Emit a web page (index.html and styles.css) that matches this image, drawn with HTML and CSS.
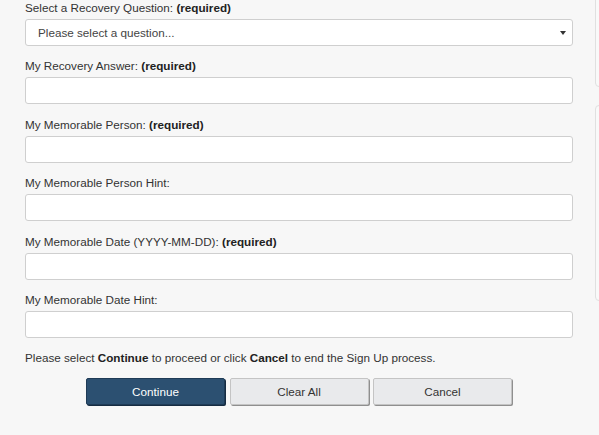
FILE: index.html
```html
<!DOCTYPE html>
<html>
<head>
<meta charset="utf-8">
<link rel="stylesheet" href="styles.css">
</head>
<body>
<div class="page">
  <main class="main">
    <form class="form">
      <div class="field">
        <label class="label">Select a Recovery Question: <b>(required)</b></label>
        <div class="select">
          <span>Please select a question...</span>
          <span class="arrow"></span>
        </div>
      </div>
      <div class="field">
        <label class="label">My Recovery Answer: <b>(required)</b></label>
        <input class="input" type="text">
      </div>
      <div class="field">
        <label class="label">My Memorable Person: <b>(required)</b></label>
        <input class="input" type="text">
      </div>
      <div class="field">
        <label class="label">My Memorable Person Hint:</label>
        <input class="input" type="text">
      </div>
      <div class="field">
        <label class="label">My Memorable Date (YYYY-MM-DD): <b>(required)</b></label>
        <input class="input" type="text">
      </div>
      <div class="field">
        <label class="label">My Memorable Date Hint:</label>
        <input class="input" type="text">
      </div>
      <p class="note">Please select <b>Continue</b> to proceed or click <b>Cancel</b> to end the Sign Up process.</p>
      <div class="buttons">
        <button type="button" class="btn btn-primary">Continue</button>
        <button type="button" class="btn">Clear All</button>
        <button type="button" class="btn">Cancel</button>
      </div>
    </form>
  </main>
  <aside class="side">
    <div class="box box-top"></div>
    <div class="box box-second"></div>
  </aside>
</div>
</body>
</html>
```
FILE: styles.css
```css
html, body {
  margin: 0;
  padding: 0;
  background: #f7f7f7;
  overflow: hidden;
}
body {
  font-family: "Liberation Sans", Arial, sans-serif;
  font-size: 11.7px;
  color: #333;
}
.page {
  display: flex;
  width: 599px;
  height: 435px;
  overflow: hidden;
}
.main {
  flex: 0 0 595px;
  box-sizing: border-box;
  padding: 0 22px 0 25px;
}
.form {
  margin: 0;
}
.field {
  display: flex;
  flex-direction: column;
  margin-bottom: 12.4px;
}
.label {
  line-height: 16px;
  margin-bottom: 3px;
}
.label b {
  font-weight: bold;
  color: #222;
}
.input, .select {
  box-sizing: border-box;
  height: 27px;
  width: 548px;
  background: #fff;
  border: 1px solid #cfcfcf;
  border-radius: 3px;
  margin: 0;
  padding: 0 12px;
  font: inherit;
}
.select {
  display: flex;
  align-items: center;
  justify-content: space-between;
  color: #444;
  padding: 0 6px 0 12px;
}
.arrow {
  width: 0;
  height: 0;
  border-left: 3px solid transparent;
  border-right: 3px solid transparent;
  border-top: 4px solid #333;
  margin-top: 1px;
}
.note {
  margin: 0 0 12px;
  line-height: 16px;
}
.note b {
  color: #222;
}
.buttons {
  display: flex;
  justify-content: center;
  gap: 4.5px;
}
.btn {
  box-sizing: border-box;
  width: 139px;
  height: 27px;
  font: inherit;
  color: #333;
  background: #e9eaec;
  border: 1px solid #c4c4c4;
  border-radius: 2px;
  box-shadow: 1px 1px 0 #8f8f8f;
  padding: 0;
}
.btn-primary {
  background: #2c5071;
  border-color: #1f3b56;
  color: #fff;
  box-shadow: 1px 1px 0 #162c42;
}
.side {
  flex: 1 0 auto;
  display: flex;
  flex-direction: column;
}
.box {
  box-sizing: border-box;
  width: 120px;
  border: 1px solid #e0e0e0;
  border-radius: 4px;
  background: #f9f9f9;
}
.box-top {
  height: 93px;
  margin-top: -6px;
}
.box-second {
  height: 196px;
  margin-top: 18px;
}
```
